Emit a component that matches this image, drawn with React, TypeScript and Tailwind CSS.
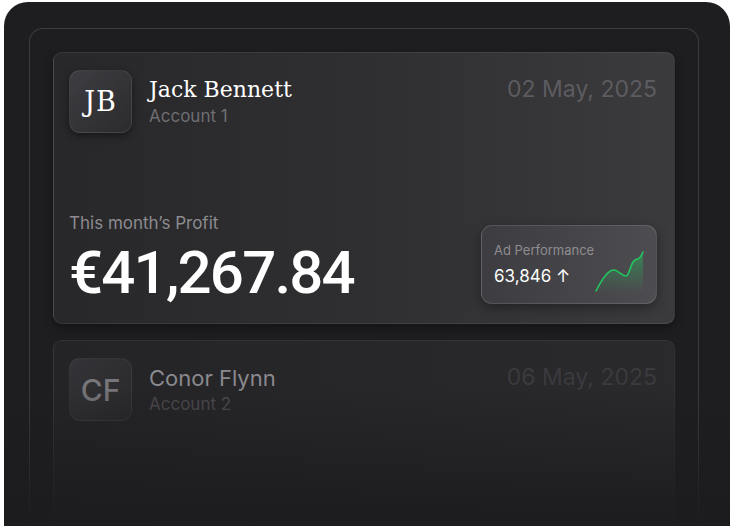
import React from "react";

const sans = { fontFamily: "Inter, 'Noto Sans', sans-serif" };

function Spark() {
  return (
    <svg width="52" height="44" viewBox="0 0 52 44" className="absolute right-[10px] bottom-[10px]">
      <defs>
        <linearGradient id="g1" x1="0" y1="0" x2="0" y2="1">
          <stop offset="0" stopColor="#22c55e" stopOpacity="0.45" />
          <stop offset="1" stopColor="#22c55e" stopOpacity="0" />
        </linearGradient>
      </defs>
      <path
        d="M2 42 C7 32 13 22 19 21 C24 20 28 28 32 27 C36 26 36 14 41 11 C45 9 46 10 47 7 L49 3 L49 44 L2 44 Z"
        fill="url(#g1)"
      />
      <path
        d="M2 42 C7 32 13 22 19 21 C24 20 28 28 32 27 C36 26 36 14 41 11 C45 9 46 10 47 7 L49 3"
        fill="none"
        stroke="#22c55e"
        strokeWidth="1.6"
        strokeLinecap="round"
      />
    </svg>
  );
}

export default function App() {
  return (
    <div className="w-[735px] h-[532px] bg-white pt-[2px] pl-[4px] pr-[5px]" style={sans}>
      <div className="relative h-[524px] rounded-t-[24px] bg-[#1e1d20] pl-[25px] pr-[31px] pt-[26px] overflow-hidden">
        <div className="h-full rounded-t-[14px] border border-b-0 border-[#3d3c40] pt-[23px] px-[23px] flex flex-col gap-[16px]">
          {/* Card 1 */}
          <div className="h-[272px] shrink-0 rounded-[9px] border border-[#ffffff14] bg-gradient-to-r from-[#28272a] via-[#2f2e31] to-[#3b3a3d] pl-[15px] pr-[17px] pt-[17px] pb-[19px] flex flex-col justify-between shadow-[0_4px_10px_rgba(0,0,0,0.35)]">
            <div className="flex items-start">
              <div className="w-[63px] h-[63px] rounded-[11px] border border-[#ffffff12] bg-gradient-to-br from-[#3e3d41] to-[#2b2a2d] shadow-[0_3px_8px_rgba(0,0,0,0.45)] flex items-center justify-center">
                <span className="text-white text-[27px] leading-none tracking-[1px]" style={{ fontFamily: "'DejaVu Serif', serif" }}>JB</span>
              </div>
              <div className="ml-[17px] pt-[7px] flex flex-col">
                <span className="text-white text-[22px] leading-[26px]" style={{ fontFamily: "'DejaVu Serif', serif" }}>Jack Bennett</span>
                <span className="text-[#6f6e72] text-[17px] leading-[22px] mt-[2px]">Account 1</span>
              </div>
              <div className="ml-auto pt-[5px] text-[#5d5c60] text-[23px] leading-[28px]">02 May, 2025</div>
            </div>
            <div className="flex items-end justify-between">
              <div className="flex flex-col">
                <span className="text-[#8c8b8f] text-[17px] leading-[22px]">This month’s Profit</span>
                <span className="text-white text-[60px] font-medium leading-[62px] mt-[8px] tracking-[-1.8px]" style={{ fontFamily: "Roboto, sans-serif" }}>€41,267.84</span>
              </div>
              <div className="relative w-[176px] h-[79px] rounded-[11px] border border-[#ffffff1f] bg-gradient-to-r from-[#3d3c40] to-[#4d4c50] shadow-[0_4px_12px_rgba(0,0,0,0.35)] pl-[12px] pt-[16px]">
                <div className="text-[#8e8d91] text-[13px] leading-[16px]">Ad Performance</div>
                <div className="text-white text-[17px] leading-[22px] mt-[7px]">63,846 ↑</div>
                <Spark />
              </div>
            </div>
          </div>
          {/* Card 2 */}
          <div className="h-[272px] shrink-0 rounded-[9px] border border-[#ffffff10] bg-gradient-to-r from-[#242326] to-[#2a292c] pl-[15px] pr-[17px] pt-[17px]">
            <div className="flex items-start">
              <div className="w-[63px] h-[63px] rounded-[11px] border border-[#ffffff0c] bg-gradient-to-br from-[#343337] to-[#29282b] flex items-center justify-center">
                <span className="text-[#77767a] text-[30px] font-medium leading-none">CF</span>
              </div>
              <div className="ml-[17px] pt-[7px] flex flex-col">
                <span className="text-[#8a898d] text-[22px] leading-[26px]">Conor Flynn</span>
                <span className="text-[#4c4b4f] text-[17px] leading-[22px] mt-[2px]">Account 2</span>
              </div>
              <div className="ml-auto pt-[5px] text-[#3b3a3e] text-[23px] leading-[28px]">06 May, 2025</div>
            </div>
          </div>
        </div>
        <div className="absolute left-0 right-0 bottom-0 h-[140px] bg-gradient-to-b from-transparent to-[#1c1b1e]" />
      </div>
    </div>
  );
}
